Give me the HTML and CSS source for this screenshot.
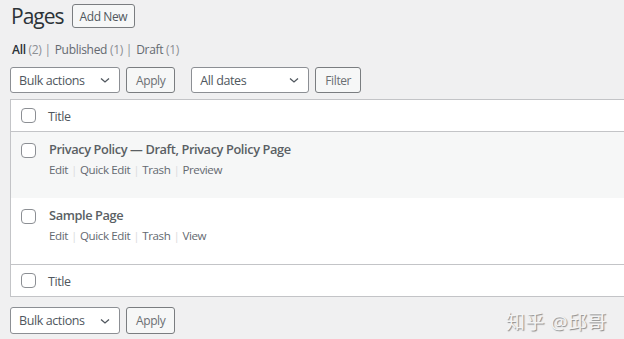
FILE: index.html
```html
<!DOCTYPE html>
<html lang="en">
<head>
  <meta charset="UTF-8" />
  <title>Pages</title>
  <link rel="stylesheet" href="styles.css">
</head>
<body>
  <div class="wrap">
    <div class="page-head">
      <h1>Pages</h1>
      <a class="btn add-new">Add New</a>
    </div>

    <ul class="subsubsub">
      <li><a class="current">All <span class="count">(2)</span></a> |</li>
      <li><a>Published <span class="count">(1)</span></a> |</li>
      <li><a>Draft <span class="count">(1)</span></a></li>
    </ul>

    <div class="tablenav">
      <div class="select bulk">
        <span>Bulk actions</span>
        <svg width="12" height="12" viewBox="0 0 12 12"><path d="M2 4.5 L6 8 L10 4.5" fill="none" stroke="#50575e" stroke-width="1.3"/></svg>
      </div>
      <a class="btn">Apply</a>
      <div class="select dates">
        <span>All dates</span>
        <svg width="12" height="12" viewBox="0 0 12 12"><path d="M2 4.5 L6 8 L10 4.5" fill="none" stroke="#50575e" stroke-width="1.3"/></svg>
      </div>
      <a class="btn">Filter</a>
    </div>

    <div class="list-table">
      <div class="row head">
        <span class="check"></span>
        <span class="col-title">Title</span>
      </div>
      <div class="row item alt">
        <span class="check"></span>
        <div class="col-title">
          <strong>Privacy Policy — Draft, Privacy Policy Page</strong>
          <div class="row-actions">
            <a>Edit</a><i>|</i><a>Quick Edit</a><i>|</i><a>Trash</a><i>|</i><a>Preview</a>
          </div>
        </div>
      </div>
      <div class="row item">
        <span class="check"></span>
        <div class="col-title">
          <strong>Sample Page</strong>
          <div class="row-actions">
            <a>Edit</a><i>|</i><a>Quick Edit</a><i>|</i><a>Trash</a><i>|</i><a>View</a>
          </div>
        </div>
      </div>
      <div class="row foot">
        <span class="check"></span>
        <span class="col-title">Title</span>
      </div>
    </div>

    <div class="tablenav bottom">
      <div class="select bulk">
        <span>Bulk actions</span>
        <svg width="12" height="12" viewBox="0 0 12 12"><path d="M2 4.5 L6 8 L10 4.5" fill="none" stroke="#50575e" stroke-width="1.3"/></svg>
      </div>
      <a class="btn">Apply</a>
      <div class="watermark">知乎 @邱哥</div>
    </div>
  </div>
</body>
</html>
```

FILE: styles.css
```css
* {
  margin: 0;
  padding: 0;
  box-sizing: border-box;
}

body {
  font-family: 'Open Sans', 'Noto Sans CJK SC', sans-serif;
  font-size: 13px;
  color: #3c434a;
  background: #f0f0f1;
  overflow: hidden;
  width: 624px;
  height: 339px;
}

.wrap {
  padding-left: 10px;
}

.page-head {
  display: flex;
  align-items: center;
  gap: 8px;
  height: 32px;
}

h1 {
  font-size: 21px;
  font-weight: 400;
  color: #2c3338;
  letter-spacing: -1px;
  padding-left: 1px;
}

.btn {
  display: inline-flex;
  align-items: center;
  justify-content: center;
  height: 26px;
  padding: 0 9px;
  border: 1px solid #7a7d80;
  border-radius: 3px;
  background: #f6f7f7;
  color: #6b6f73;
  font-size: 12px;
  letter-spacing: -0.4px;
}

.add-new {
  height: 24px;
  padding: 0 7px;
  color: #50575e;
}

.subsubsub {
  list-style: none;
  display: flex;
  gap: 4px;
  margin-top: 9px;
  height: 18px;
  font-size: 12px;
  letter-spacing: -0.3px;
  padding-left: 2px;
  color: #8c8f94;
}

.subsubsub a {
  color: #646970;
}

.subsubsub .current {
  color: #2c3338;
  font-weight: 600;
}

.subsubsub .count {
  color: #8c8f94;
  font-weight: 400;
}

.tablenav {
  display: flex;
  align-items: center;
  gap: 6px;
  margin-top: 8px;
  height: 26px;
}

.select {
  display: flex;
  align-items: center;
  justify-content: space-between;
  height: 26px;
  padding: 0 8px;
  border: 1px solid #8c8f94;
  border-radius: 3px;
  background: #fff;
  color: #50575e;
  font-size: 12.5px;
  letter-spacing: -0.4px;
}

.bulk {
  width: 110px;
}

.dates {
  width: 118px;
  margin-left: 10px;
}

.list-table {
  margin-top: 6px;
  width: 640px;
  background: #fff;
  border: 1px solid #c3c4c7;
  border-right: none;
}

.row {
  display: flex;
  align-items: flex-start;
}

.row.head,
.row.foot {
  height: 32px;
  align-items: center;
}

.row.head {
  border-bottom: 1px solid #c3c4c7;
}

.row.foot {
  border-top: 1px solid #c3c4c7;
}

.row.item {
  height: 66px;
}

.row.alt {
  background: #f6f7f7;
}

.check {
  width: 15px;
  height: 15px;
  margin-left: 10px;
  margin-right: 12px;
  border: 1px solid #8c8f94;
  border-radius: 4px;
  background: #fff;
  flex-shrink: 0;
}

.row.item .check {
  margin-top: 11px;
}

.head .col-title,
.foot .col-title {
  color: #50575e;
  font-size: 12.5px;
  letter-spacing: -0.4px;
  padding-top: 1px;
}

.row.item .col-title {
  padding-top: 7px;
  padding-left: 1px;
}

.row.item strong {
  display: block;
  font-size: 12.8px;
  font-weight: 600;
  color: #5a5f64;
  letter-spacing: -0.4px;
  line-height: 20px;
}

.row-actions {
  margin-top: 2px;
  font-size: 11.6px;
  letter-spacing: -0.4px;
  color: #646970;
  line-height: 18px;
}

.row-actions i {
  font-style: normal;
  color: #dcdcde;
  padding: 0 3px;
}

.tablenav.bottom {
  margin-top: 10px;
  height: 27px;
}

.tablenav.bottom .select,
.tablenav.bottom .btn {
  height: 27px;
}

.watermark {
  margin-left: auto;
  margin-right: 17px;
  font-size: 19px;
  color: #f4f4f4;
  text-shadow: 1px 1px 1px #8a8a8a;
  letter-spacing: 0.5px;
}
```
